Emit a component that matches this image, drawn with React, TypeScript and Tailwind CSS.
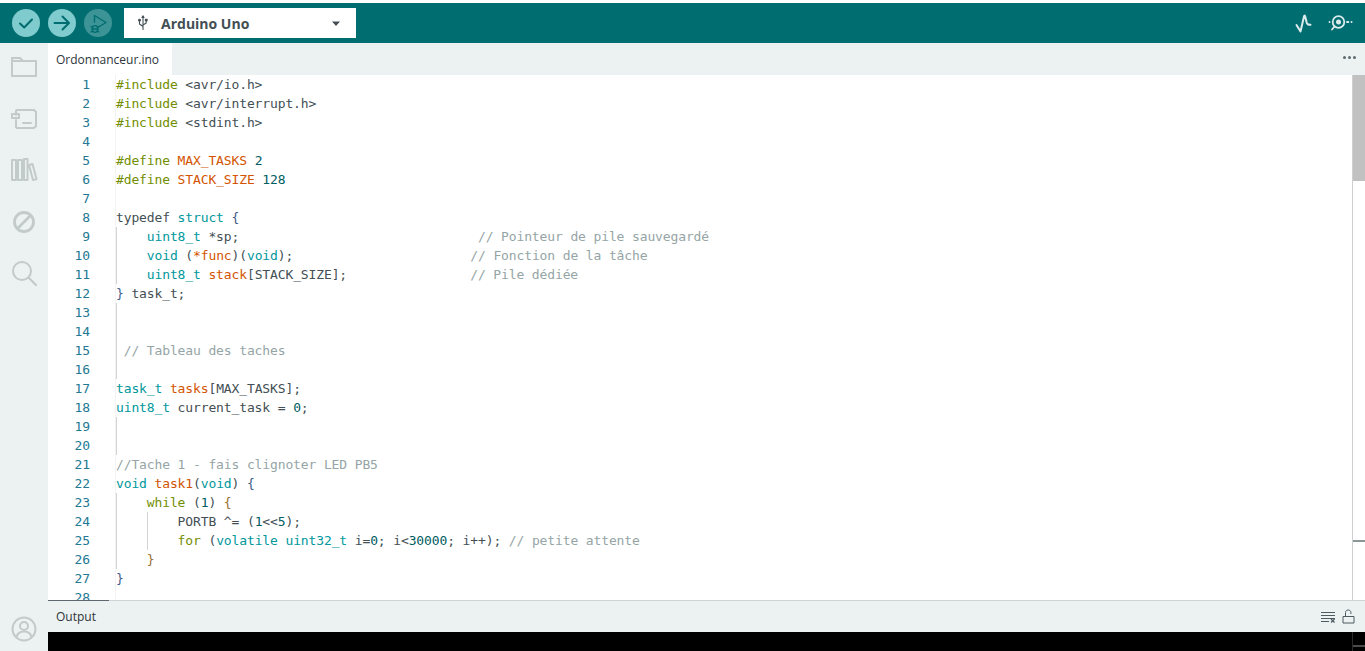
import React from 'react';

type Tok = [string, string?];

const T = 'text-[#00979d]'; // types / keywords
const P = 'text-[#728e00]'; // preprocessor / control
const F = 'text-[#d35400]'; // names
const N = 'text-[#005c5f]'; // numbers
const C = 'text-[#95a5a6]'; // comments
const B = 'text-[#3f5a8a]'; // outer brackets
const R = 'text-[#9a7030]'; // second level brackets

const lines: { toks: Tok[]; guides?: number[] }[] = [
  { toks: [['#include', P], [' <avr/io.h>']] },
  { toks: [['#include', P], [' <avr/interrupt.h>']] },
  { toks: [['#include', P], [' <stdint.h>']] },
  { toks: [] },
  { toks: [['#define', P], [' '], ['MAX_TASKS', F], [' '], ['2', N]] },
  { toks: [['#define', P], [' '], ['STACK_SIZE', F], [' '], ['128', N]] },
  { toks: [] },
  { toks: [['typedef'], [' '], ['struct', T], [' '], ['{', B]] },
  { toks: [['    '], ['uint8_t', T], [' *sp;'], ['                               '], ['// Pointeur de pile sauvegardé', C]], guides: [0] },
  { toks: [['    '], ['void', T], [' ('], ['*func', F], [')('], ['void', T], [');'], ['                       '], ['// Fonction de la tâche', C]], guides: [0] },
  { toks: [['    '], ['uint8_t', T], [' '], ['stack', F], ['[STACK_SIZE];'], ['                '], ['// Pile dédiée', C]], guides: [0] },
  { toks: [['}', B], [' task_t;']] },
  { toks: [], guides: [0] },
  { toks: [], guides: [0] },
  { toks: [[' '], ['// Tableau des taches', C]], guides: [0] },
  { toks: [], guides: [0] },
  { toks: [['task_t', T], [' '], ['tasks', F], ['[MAX_TASKS];']] },
  { toks: [['uint8_t', T], [' current_task = '], ['0', N], [';']] },
  { toks: [], guides: [0] },
  { toks: [], guides: [0] },
  { toks: [['//Tache 1 - fais clignoter LED PB5', C]] },
  { toks: [['void', T], [' '], ['task1', F], ['('], ['void', T], [') '], ['{', B]] },
  { toks: [['    '], ['while', P], [' ('], ['1', N], [') '], ['{', R]], guides: [0] },
  { toks: [['        PORTB ^= ('], ['1', N], ['<<'], ['5', N], [');']], guides: [0, 1] },
  { toks: [['        '], ['for', P], [' ('], ['volatile', T], [' '], ['uint32_t', T], [' i='], ['0', N], ['; i<'], ['30000', N], ['; i++); '], ['// petite attente', C]], guides: [0, 1] },
  { toks: [['    '], ['}', R]], guides: [0] },
  { toks: [['}', B]] },
  { toks: [] },
];

const IconPath = ({ children, className }: { children: React.ReactNode; className?: string }) => (
  <svg viewBox="0 0 28 28" fill="none" stroke="currentColor" strokeWidth="2" strokeLinecap="round" strokeLinejoin="round" className={className}>
    {children}
  </svg>
);

const SideIcon = ({ children }: { children: React.ReactNode }) => (
  <div className="h-[52px] flex items-center justify-center text-[#c3caca]">
    <IconPath className="w-7 h-7">{children}</IconPath>
  </div>
);

const App = () => {
  return (
    <div className="h-screen flex flex-col overflow-hidden bg-white font-['Open_Sans',sans-serif]">
      <div className="h-[3px] bg-white" />

      {/* Toolbar */}
      <div className="h-10 bg-[#006d70] flex items-center pl-3 pr-[11px]">
        <div className="flex gap-[8px]">
          <div className="w-7 h-7 rounded-full bg-[#7fcbcd] flex items-center justify-center text-[#006d70]">
            <svg viewBox="0 0 28 28" className="w-7 h-7" fill="none" stroke="currentColor" strokeWidth="2" strokeLinecap="round" strokeLinejoin="round">
              <path d="M8 14.5l4.2 4L20 10.5" />
            </svg>
          </div>
          <div className="w-7 h-7 rounded-full bg-[#7fcbcd] flex items-center justify-center text-[#006d70]">
            <svg viewBox="0 0 28 28" className="w-7 h-7" fill="none" stroke="currentColor" strokeWidth="2" strokeLinecap="round" strokeLinejoin="round">
              <path d="M6.5 14h14.5M14.5 7.5L21 14l-6.5 6.5" />
            </svg>
          </div>
          <div className="w-7 h-7 rounded-full bg-[#3d9496] flex items-center justify-center text-[#006d70]">
            <svg viewBox="0 0 28 28" className="w-7 h-7" fill="none" stroke="currentColor" strokeWidth="1.4" strokeLinecap="round" strokeLinejoin="round">
              <path d="M10.5 13V6.5L22 13.5l-7.5 4.5" />
              <ellipse cx="11" cy="20" rx="2.8" ry="3.4" />
              <path d="M8.2 20h5.6M7 17.5l1.6 1M15 17.5l-1.6 1M7 23l1.6-1M15 23l-1.6-1" />
            </svg>
          </div>
        </div>

        <div className="ml-[12px] w-[232px] h-[30px] bg-white flex items-center pl-[13px] pr-[15px] text-[#434f54]">
          <svg viewBox="0 0 12 16" className="w-3 h-4" fill="none" stroke="currentColor" strokeWidth="1.1" strokeLinecap="round" strokeLinejoin="round">
            <path d="M6 1v13.5M6 11.5L2.5 9V6M6 10l3.2-2V5.5" />
            <circle cx="2.5" cy="5.2" r="0.9" fill="currentColor" />
            <path d="M8.4 4.2h1.7v1.6H8.4z" fill="currentColor" />
            <path d="M5 2.5L6 1l1 1.5z" fill="currentColor" />
          </svg>
          <span className="ml-[12px] mt-[2px] text-[14px] font-bold leading-none">Arduino Uno</span>
          <svg viewBox="0 0 10 6" className="ml-auto mt-px w-[10px] h-[6px]" fill="currentColor">
            <path d="M1 .5h8L5 5z" />
          </svg>
        </div>

        <div className="ml-auto flex items-center gap-[14px] text-[#dcecec]">
          <svg viewBox="0 0 20 20" className="w-5 h-5" fill="none" stroke="currentColor" strokeWidth="2" strokeLinecap="round" strokeLinejoin="round">
            <path d="M2.500 12l4 6.500L10 3.500c.3-1.200.9-1.200 1.200 0l1.600 6.500c.3 1.100 1 1.800 3.700 1.800" />
          </svg>
          <svg viewBox="0 0 26 20" className="w-[26px] h-5" fill="none" stroke="currentColor" strokeWidth="1.800" strokeLinecap="round" strokeLinejoin="round">
            <circle cx="10.500" cy="9" r="5.800" />
            <circle cx="10.500" cy="9" r="1.600" fill="currentColor" />
            <path d="M6.500 13.500L4 16.500" />
            <path d="M1.500 9h.1M19 9h1.400M23.500 9h.1" />
          </svg>
        </div>
      </div>

      <div className="flex-1 min-h-0 flex">
        {/* Sidebar */}
        <div className="w-12 shrink-0 bg-[#ecf1f1] flex flex-col">
          <div className="-mt-[2px]">
            <SideIcon>
              <path d="M2 5h8l3 3h13v15H2z" />
              <path d="M2 8h11" />
            </SideIcon>
            <div className="-mt-px">
              <SideIcon>
                <path d="M7 6h17l2 2v14l-2 2H7l-1-1v-7M6 11V6.500" />
                <path d="M2 10h7v4H2z" />
                <path d="M13 19h8" />
              </SideIcon>
            </div>
            <SideIcon>
              <path d="M2 4h4v20H2zM8 4h4v20H8zM14 3h3.500v21H14zM19 9l3.500-1 4 15-3.500 1z" />
            </SideIcon>
            <SideIcon>
              <circle cx="14" cy="14" r="9.500" strokeWidth="2.800" />
              <path d="M8 20L20 8" strokeWidth="2.800" />
            </SideIcon>
            <div className="-mt-px">
              <SideIcon>
                <circle cx="12" cy="12" r="9" />
                <path d="M18.500 18.500L26 26" strokeWidth="2.200" />
              </SideIcon>
            </div>
          </div>
          <div className="mt-auto h-[36px] flex items-start justify-center text-[#c3caca]">
            <IconPath className="w-7 h-7">
              <circle cx="14" cy="14" r="11.500" />
              <circle cx="14" cy="11" r="4" />
              <path d="M6.500 22c1-4 4-5.500 7.500-5.500s6.500 1.500 7.500 5.500" />
            </IconPath>
          </div>
        </div>

        <div className="flex-1 min-w-0 flex flex-col">
          {/* Tab bar */}
          <div className="h-8 shrink-0 bg-[#ecf1f1] flex items-stretch">
            <div className="w-[124px] bg-white flex items-center pl-2 pt-px text-[12px] text-[#2c353a]">Ordonnanceur.ino</div>
            <div className="ml-auto pr-[9px] pb-[3px] flex items-center gap-[2px]">
              <span className="w-[3px] h-[3px] rounded-full bg-[#5e6a70]" />
              <span className="w-[3px] h-[3px] rounded-full bg-[#5e6a70]" />
              <span className="w-[3px] h-[3px] rounded-full bg-[#5e6a70]" />
            </div>
          </div>

          {/* Editor */}
          <div className="flex-1 min-h-0 flex overflow-hidden">
            <div className="flex-1 min-w-0 overflow-hidden font-['DejaVu_Sans_Mono',monospace] text-[13px] tracking-[-0.126px] text-[#434f54]">
              {lines.map((line, i) => (
                <div key={i} className="h-[19px] flex leading-[19px] whitespace-pre">
                  <div className="w-[42px] shrink-0 text-right text-[#237893]">{i + 1}</div>
                  <div className="relative ml-[25px] flex-1 border-l border-[#f3f3f3]">
                    {line.guides?.map((g) => (
                      <span key={g} className={g === 0 ? 'absolute top-0 bottom-0 left-0 w-px bg-[#d3d3d3]' : 'absolute top-0 bottom-0 left-[31px] w-px bg-[#d3d3d3]'} />
                    ))}
                    {line.toks.map((t, j) => (
                      <span key={j} className={t[1]}>{t[0]}</span>
                    ))}
                  </div>
                </div>
              ))}
            </div>
            {/* Scrollbar */}
            <div className="relative w-[13px] shrink-0 border-l border-[#cfcfcf]">
              <div className="h-[106px] bg-[#c1c1c1]" />
              <div className="absolute left-0 right-0 top-[465px] h-[2px] bg-[#8b9696]" />
            </div>
          </div>

          {/* Output bar */}
          <div className="relative h-8 shrink-0 bg-[#ecf1f1] border-t border-[#ced4d4] flex items-center pl-2 pr-[10px] text-[12px] text-[#2c353a]">
            <div className="absolute left-0 -top-px w-[61px] h-px bg-[#5e6a70]" />
            <span className="pt-px">Output</span>
            <div className="ml-auto flex items-center gap-[6px] text-[#4e5b61]">
              <svg viewBox="0 0 16 12" className="w-4 h-3" fill="none" stroke="currentColor" strokeWidth="1">
                <path d="M1 1.500h14M1 4.500h14M1 7.500h14M1 10.500h8" />
                <path d="M11 8l3.500 3.500M14.500 8L11 11.500" strokeWidth="1.200" />
              </svg>
              <svg viewBox="0 0 13 15" className="w-[13px] h-[15px]" fill="none" stroke="currentColor" strokeWidth="1">
                <path d="M1 7.500h11v6.500H1z" />
                <path d="M3.500 7.500V3.500C3.500 2 4.700 1 6.200 1s2.700 1 2.700 2.500V5" />
              </svg>
            </div>
          </div>

          {/* Console */}
          <div className="relative h-[19px] shrink-0 bg-black">
            <div className="absolute right-[12px] top-0 bottom-0 w-px bg-[#2a2a2a]" />
            <div className="absolute right-0 top-[13px] w-[12px] h-[2px] bg-[#4a4a4a]" />
          </div>
        </div>
      </div>
    </div>
  );
};

export default App;
